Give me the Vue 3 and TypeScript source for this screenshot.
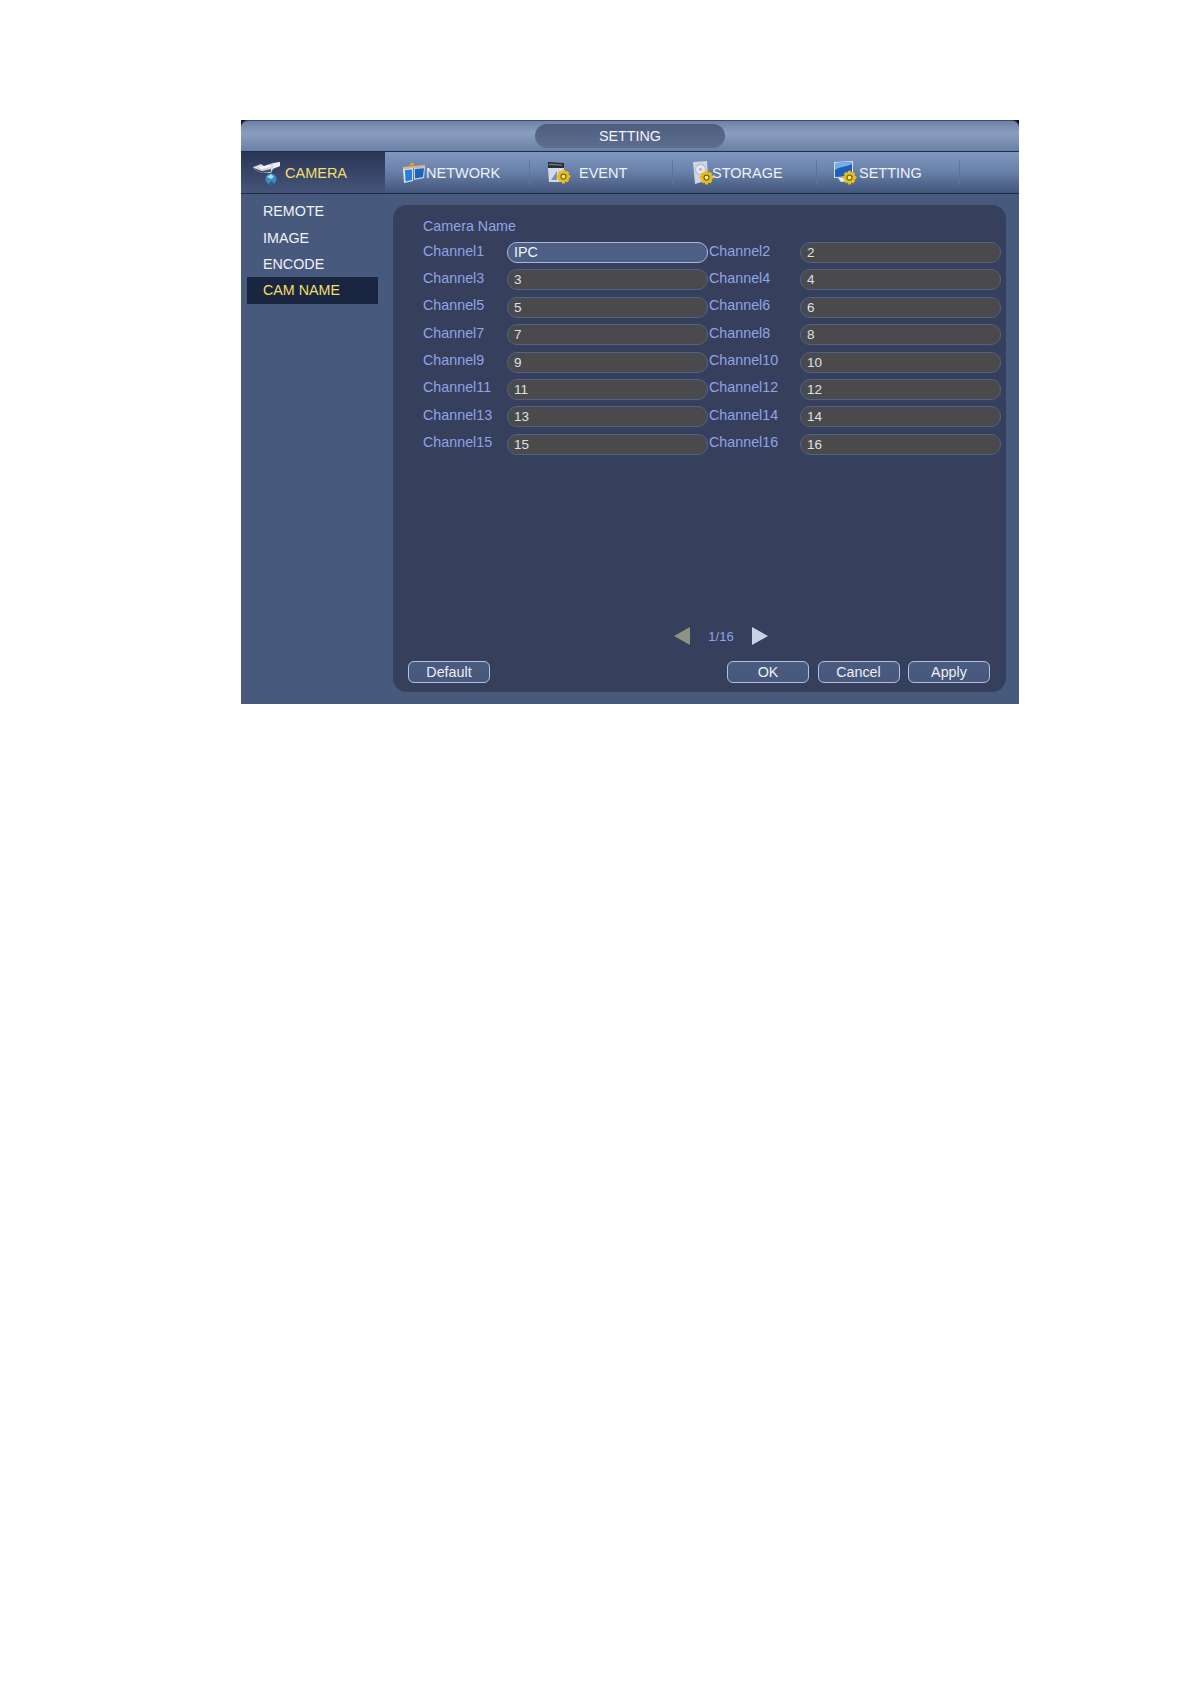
<template>
  <div class="page">
    <div class="window">
      <div class="title-bar">
        <div class="title-pill">SETTING</div>
      </div>

      <div class="tab-bar">
        <div class="tab tab-active">
          <svg class="icon cam-icon" viewBox="0 0 29 24">
            <path d="M1 6 L9 3 L12 5 L21 2 L28 1 L28 5 L21 8 L19 12 L10 12 L3 9 Z" fill="#d4d8e2" />
            <path d="M2 7 L10 10 L19 8 L19 11 L10 12 L3 9 Z" fill="#4d5362" />
            <path d="M7 6 L18 4 L19 6 L9 8 Z" fill="#f5f6f9" />
            <path d="M21 3 L28 1 L28 5 L21 7 Z" fill="#eef0f5" />
            <circle cx="19" cy="18" r="5.5" fill="#3a8dc4" />
            <path d="M15 16 L19 13 L22 16 L19 18 Z" fill="#a6d8f0" />
            <path d="M17 22 L20 20 L22 22 L19 24 Z" fill="#1f5f92" />
          </svg>
          <span class="tab-label">CAMERA</span>
        </div>

        <div class="tab tab-network">
          <svg class="icon net-icon" viewBox="0 0 24 21">
            <path d="M1 5 L23 3 L23 5 L1 7 Z" fill="#e8b46e" />
            <path d="M7 4 L10 0 L13 3 Z" fill="#d8a23c" />
            <path d="M1 7 L11 6 L11 19 L2 21 Z" fill="#d6e4f4" />
            <path d="M3 8 L10 7.5 L10 18 L3.5 19.5 Z" fill="#2b7ed8" />
            <path d="M12 6 L23 5 L22 16 L12 18 Z" fill="#c4d6ec" />
            <path d="M13 7 L22 6.2 L21 15 L13 16.6 Z" fill="#1c63bd" />
          </svg>
          <span class="tab-label">NETWORK</span>
        </div>

        <div class="tab tab-event">
          <svg class="icon ev-icon" viewBox="0 0 24 22">
            <path d="M1 0 L17 1 L17 6 L1 6 Z" fill="#2b2f3a" />
            <path d="M2 2 L15 2.5 L15 3.5 L2 3 Z" fill="#8a8f9c" />
            <path d="M1 6 L17 6 L17 20 L2 20 Z" fill="#d5dae6" />
            <path d="M4 18 L10 9 L10 18 Z" fill="#7d8fb8" />
            <use href="#gear" x="9" y="7" width="15" height="15" />
          </svg>
          <span class="tab-label">EVENT</span>
        </div>

        <div class="tab tab-storage">
          <svg class="icon st-icon" viewBox="0 0 22 24">
            <path d="M1 1 L15 0 L16 19 L3 23 Z" fill="#d0d5e2" />
            <circle cx="8.5" cy="8.5" r="5" fill="#e6e9f0" stroke="#a9b1c4" stroke-width="1" />
            <circle cx="8.5" cy="8.5" r="1.4" fill="#a9b1c4" />
            <use href="#gear" x="7" y="9" width="15" height="15" />
          </svg>
          <span class="tab-label">STORAGE</span>
        </div>

        <div class="tab tab-setting">
          <svg class="icon se-icon" viewBox="0 0 24 24">
            <path d="M1 1 L20 0 L20 16 L1 17 Z" fill="#d7e2f2" />
            <path d="M2 2 L19 1 L19 15 L2 16 Z" fill="#1f5fb8" />
            <path d="M2 9 C8 5 13 6 19 3 L19 1 L2 2 Z" fill="#6fb0e6" />
            <path d="M5 17 L14 17 L18 20 L8 21 Z" fill="#e6eaf2" />
            <use href="#gear" x="9" y="9" width="15" height="15" />
          </svg>
          <span class="tab-label">SETTING</span>
        </div>
        <div class="tab-rest"></div>

        <!-- shared gear for the tab icons -->
        <svg class="defs" aria-hidden="true">
          <symbol id="gear" viewBox="0 0 24 24">
            <path
              d="M10 1h4l1 3 3-1 3 3-1 3 3 1v4l-3 1 1 3-3 3-3-1-1 3h-4l-1-3-3 1-3-3 1-3-3-1v-4l3-1-1-3 3-3 3 1z"
              fill="#e6bd1c"
            />
            <circle cx="12" cy="12" r="4" fill="#f6e88a" stroke="#7d650f" stroke-width="2" />
          </symbol>
        </svg>
      </div>

      <div class="body">
        <ul class="side-menu">
          <li v-for="item in menu" :key="item" :class="{ selected: item === current }">{{ item }}</li>
        </ul>

        <div class="panel">
          <div class="panel-title">Camera Name</div>

          <div class="channels">
            <template v-for="ch in channels" :key="ch.label">
              <label class="ch-label">{{ ch.label }}</label>
              <div class="ch-input" :class="{ focused: ch.focused }">{{ ch.value }}</div>
            </template>
          </div>

          <div class="pager">
            <svg class="arrow" viewBox="0 0 18 20">
              <path d="M17 1 L17 19 L1 10 Z" fill="#8d9384" />
            </svg>
            <span class="page-num">1/16</span>
            <svg class="arrow" viewBox="0 0 18 20">
              <path d="M1 1 L1 19 L17 10 Z" fill="#c9d3e8" />
            </svg>
          </div>

          <div class="footer">
            <button class="btn">Default</button>
            <div class="footer-right">
              <button class="btn">OK</button>
              <button class="btn">Cancel</button>
              <button class="btn">Apply</button>
            </div>
          </div>
        </div>
      </div>
    </div>
  </div>
</template>

<script setup lang="ts">
interface Channel {
  label: string
  value: string
  focused: boolean
}

const menu = ['REMOTE', 'IMAGE', 'ENCODE', 'CAM NAME']
const current = 'CAM NAME'

const channels: Channel[] = Array.from({ length: 16 }, (_, i) => ({
  label: `Channel${i + 1}`,
  value: i === 0 ? 'IPC' : String(i + 1),
  focused: i === 0
}))
</script>

<style>
html,
body {
  background: #fff;
}
</style>

<style scoped>
.page {
  height: 1684px;
  padding: 120px 172px 0 241px;
  box-sizing: border-box;
  font-family: "Liberation Sans", Arial, sans-serif;
}

.window {
  width: 778px;
  height: 584px;
  display: flex;
  flex-direction: column;
  background: #14182a;
}

.title-bar {
  height: 32px;
  box-sizing: border-box;
  display: flex;
  justify-content: center;
  align-items: center;
  padding-bottom: 1px;
  border-top: 1px solid #3a4a68;
  border-bottom: 1px solid #1f2d4d;
  border-radius: 7px 7px 0 0;
  background: linear-gradient(#6e82a6, #8a9ebf 40%, #6a80a6);
}

.title-pill {
  width: 190px;
  height: 24px;
  border-radius: 12px;
  display: flex;
  align-items: center;
  justify-content: center;
  color: #f2f4f8;
  font-size: 14.3px;
  background: linear-gradient(#4c5d7e, #5d6e90);
}

.tab-bar {
  height: 42px;
  box-sizing: border-box;
  display: flex;
  border-bottom: 1px solid #1c2a48;
  background: linear-gradient(#8098c0, #6a82aa 45%, #42557a);
}

.tab {
  display: flex;
  align-items: center;
  box-sizing: border-box;
  height: 100%;
  color: #eef1f7;
  font-size: 14.5px;
  position: relative;
}

.tab-label {
  white-space: nowrap;
}

.tab::after {
  content: "";
  position: absolute;
  right: 0;
  top: 8px;
  bottom: 8px;
  width: 1px;
  background: #5f7498;
}

.tab-active {
  width: 144px;
  padding-left: 11px;
  color: #f3df6c;
  background: linear-gradient(#2a3555, #46557a);
}

.tab-active::after {
  display: none;
}

.tab-network {
  width: 145px;
  padding-left: 17px;
}

.tab-event {
  width: 143px;
  padding-left: 17px;
}

.tab-storage {
  width: 144px;
  padding-left: 19px;
}

.tab-setting {
  width: 143px;
  padding-left: 16px;
}

.tab-rest {
  flex: 1;
}

.icon {
  flex-shrink: 0;
}

.cam-icon {
  width: 29px;
  height: 24px;
  margin-right: 4px;
}

.net-icon {
  width: 24px;
  height: 21px;
}

.ev-icon {
  width: 24px;
  height: 22px;
  margin-right: 8px;
}

.st-icon {
  width: 22px;
  height: 24px;
  margin-right: -2px;
}

.se-icon {
  width: 24px;
  height: 24px;
  margin-right: 2px;
}

.defs {
  width: 0;
  height: 0;
  position: absolute;
}

.body {
  flex: 1;
  display: flex;
  min-height: 0;
  background: #47597c;
}

.side-menu {
  list-style: none;
  margin: 0;
  padding: 4px 0 0 6px;
  width: 152px;
  box-sizing: border-box;
  flex-shrink: 0;
}

.side-menu li {
  width: 131px;
  height: 26.4px;
  box-sizing: border-box;
  padding-left: 16px;
  display: flex;
  align-items: center;
  color: #f0f2f6;
  font-size: 14.3px;
}

.side-menu li.selected {
  color: #f3df6c;
  background: #1a2540;
}

.panel {
  width: 613px;
  height: 487px;
  margin-top: 11px;
  box-sizing: border-box;
  padding: 12px 5px 9px 15px;
  border-radius: 14px;
  background: #363f5b;
  display: flex;
  flex-direction: column;
}

.panel-title {
  color: #8fa4e8;
  font-size: 14.3px;
  padding-left: 15px;
  height: 18px;
  line-height: 18px;
}

.channels {
  margin-top: 7px;
  padding-left: 15px;
  display: grid;
  grid-template-columns: 84px 201px 92px 201px;
  grid-auto-rows: 21px;
  row-gap: 6.4px;
  align-items: center;
}

.ch-label {
  color: #8fa4e8;
  font-size: 14.3px;
  position: relative;
  top: -2px;
}

.ch-label:nth-child(4n + 3) {
  padding-left: 1px;
}

.ch-input {
  height: 21px;
  box-sizing: border-box;
  padding: 0 0 0 6px;
  border: 1px solid #50628a;
  border-radius: 10px;
  background: #4a4a4c;
  color: #dfe0e2;
  font-size: 13.5px;
  line-height: 19px;
}

.ch-input.focused {
  background: #4e5f86;
  border-color: #a9b8dc;
  color: #f2f4f8;
  font-size: 14.3px;
}

.pager {
  margin-top: auto;
  display: flex;
  justify-content: center;
  align-items: center;
  gap: 17px;
  height: 20px;
  padding-left: 33px;
}

.arrow {
  width: 18px;
  height: 20px;
}

.page-num {
  color: #8fa4e8;
  font-size: 13px;
}

.footer {
  margin-top: 15px;
  padding-right: 11px;
  display: flex;
  justify-content: space-between;
}

.footer-right {
  display: flex;
  gap: 8.5px;
}

.btn {
  width: 82px;
  height: 22px;
  box-sizing: border-box;
  padding: 0;
  border: 1px solid #b3c0dd;
  border-radius: 6px;
  background: linear-gradient(#4a5b80, #47587c);
  color: #eef0f5;
  font-family: inherit;
  font-size: 14.3px;
}
</style>
